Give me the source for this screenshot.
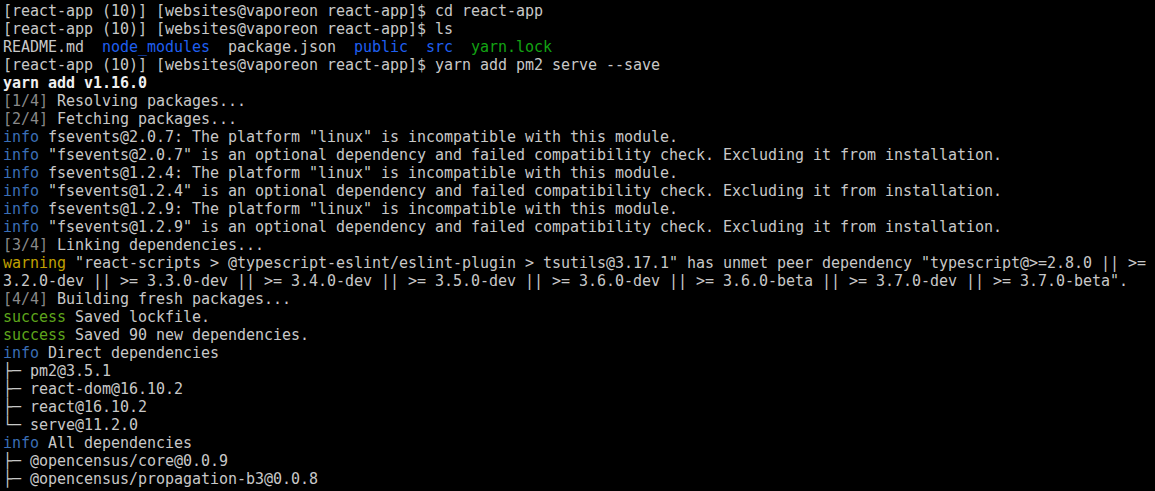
import React from "react";

type Seg = { t: string; c?: string };

const P = "[react-app (10)] [websites@vaporeon react-app]$ ";

const INFO = "text-[#3b6fb6]";
const WARN = "text-[#c0a000]";
const OK = "text-[#5ea51c]";
const DIR = "text-[#1f5ff0]";
const GRN = "text-[#13a313]";

const lines: Seg[][] = [
  [{ t: P + "cd react-app" }],
  [{ t: P + "ls" }],
  [
    { t: "README.md  " },
    { t: "node_modules", c: DIR },
    { t: "  package.json  " },
    { t: "public", c: DIR },
    { t: "  " },
    { t: "src", c: DIR },
    { t: "  " },
    { t: "yarn.lock", c: GRN },
  ],
  [{ t: P + "yarn add pm2 serve --save" }],
  [{ t: "yarn add v1.16.0", c: "font-bold text-[#f0f0f0]" }],
  [{ t: "[1/4]", c: "text-[#8a8a8a]" }, { t: " Resolving packages..." }],
  [{ t: "[2/4]", c: "text-[#8a8a8a]" }, { t: " Fetching packages..." }],
  [{ t: "info", c: INFO }, { t: ' fsevents@2.0.7: The platform "linux" is incompatible with this module.' }],
  [{ t: "info", c: INFO }, { t: ' "fsevents@2.0.7" is an optional dependency and failed compatibility check. Excluding it from installation.' }],
  [{ t: "info", c: INFO }, { t: ' fsevents@1.2.4: The platform "linux" is incompatible with this module.' }],
  [{ t: "info", c: INFO }, { t: ' "fsevents@1.2.4" is an optional dependency and failed compatibility check. Excluding it from installation.' }],
  [{ t: "info", c: INFO }, { t: ' fsevents@1.2.9: The platform "linux" is incompatible with this module.' }],
  [{ t: "info", c: INFO }, { t: ' "fsevents@1.2.9" is an optional dependency and failed compatibility check. Excluding it from installation.' }],
  [{ t: "[3/4]", c: "text-[#8a8a8a]" }, { t: " Linking dependencies..." }],
  [
    { t: "warning", c: WARN },
    { t: ' "react-scripts > @typescript-eslint/eslint-plugin > tsutils@3.17.1" has unmet peer dependency "typescript@>=2.8.0 || >=' },
  ],
  [{ t: '3.2.0-dev || >= 3.3.0-dev || >= 3.4.0-dev || >= 3.5.0-dev || >= 3.6.0-dev || >= 3.6.0-beta || >= 3.7.0-dev || >= 3.7.0-beta".' }],
  [{ t: "[4/4]", c: "text-[#8a8a8a]" }, { t: " Building fresh packages..." }],
  [{ t: "success", c: OK }, { t: " Saved lockfile." }],
  [{ t: "success", c: OK }, { t: " Saved 90 new dependencies." }],
  [{ t: "info", c: INFO }, { t: " Direct dependencies" }],
  [{ t: "├─ pm2@3.5.1" }],
  [{ t: "├─ react-dom@16.10.2" }],
  [{ t: "├─ react@16.10.2" }],
  [{ t: "└─ serve@11.2.0" }],
  [{ t: "info", c: INFO }, { t: " All dependencies" }],
  [{ t: "├─ @opencensus/core@0.0.9" }],
  [{ t: "├─ @opencensus/propagation-b3@0.0.8" }],
];

export default function App() {
  return (
    <div
      className="w-[1155px] h-[491px] overflow-hidden bg-[#000000] text-[#c8c8c8] pl-[3px] pt-[2px] text-[15px] leading-[18px] tracking-[-0.03px] whitespace-pre"
      style={{ fontFamily: '"DejaVu Sans Mono", "Liberation Mono", monospace' }}
    >
      {lines.map((segs, i) => (
        <div key={i} className="h-[18px]">
          {segs.map((s, j) => (
            <span key={j} className={s.c}>
              {s.t}
            </span>
          ))}
        </div>
      ))}
    </div>
  );
}
